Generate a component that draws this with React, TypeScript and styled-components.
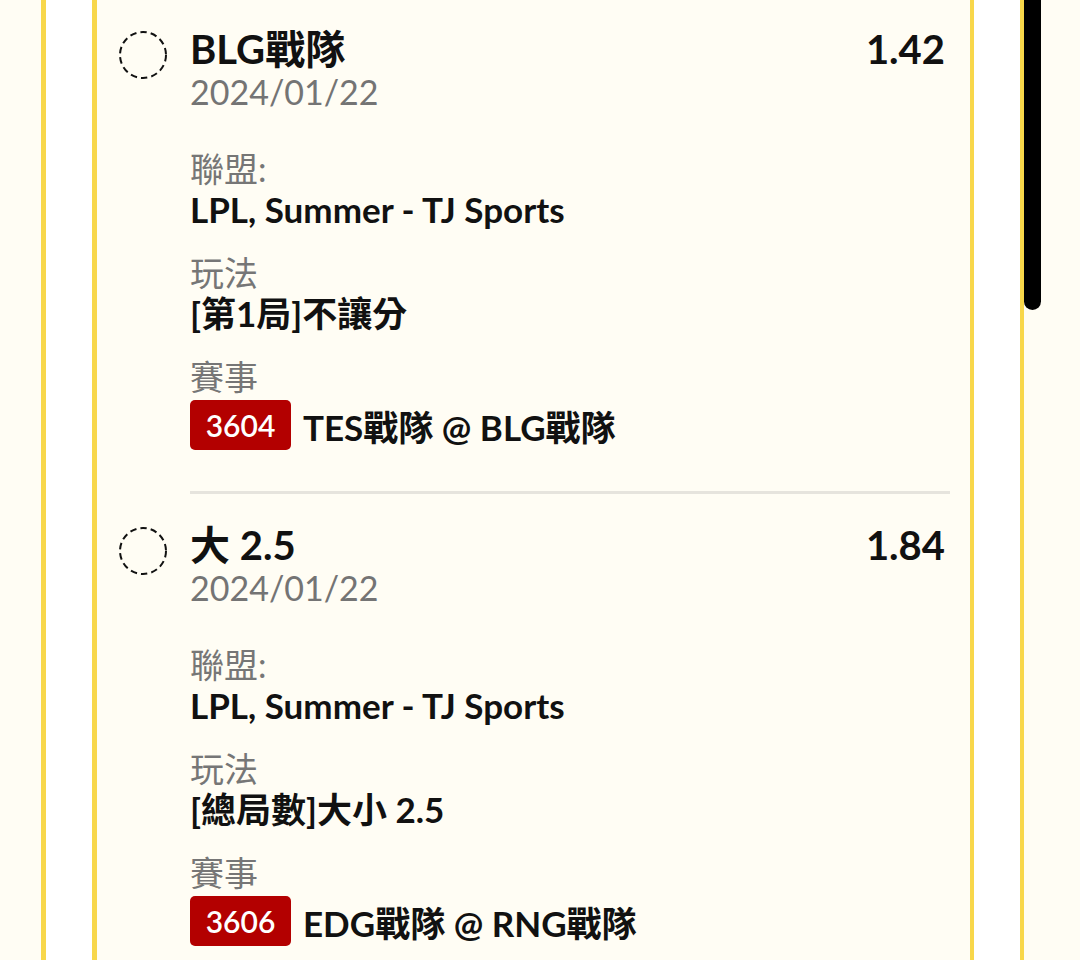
import React from "react";
import styled, { createGlobalStyle } from "styled-components";

const Global = createGlobalStyle`
  html, body { margin: 0; padding: 0; background: #fffdf4; }
  body { font-family: "Lato", "Noto Sans CJK TC", sans-serif; overflow: hidden; }
`;

const Page = styled.div`
  position: relative;
  height: 960px;
  overflow: hidden;
  padding-left: 41px;
`;

const OuterFrame = styled.div`
  width: 983px;
  box-sizing: border-box;
  background: #ffffff;
  border-left: 5px solid #f8d74a;
  border-right: 4px solid #f8d74a;
  padding: 0 46px 0 46px;
  min-height: 960px;
`;

const InnerCard = styled.div`
  background: #fffdf4;
  border-left: 5px solid #f8d74a;
  border-right: 4px solid #f8d74a;
  min-height: 960px;
  padding: 0 20px 0 22px;
`;

const Scrollbar = styled.div`
  position: absolute;
  left: 1024px;
  top: -30px;
  width: 17px;
  height: 340px;
  border-radius: 9px;
  background: #000;
`;

const Item = styled.div`
  display: grid;
  grid-template-columns: 48px 1fr;
  column-gap: 23px;
  padding: 26px 0 41px;
`;

const Radio = styled.svg`
  width: 48px;
  height: 48px;
  margin-top: 5px;
  display: block;
`;

const Body = styled.div`
  display: flex;
  flex-direction: column;
`;

const TitleRow = styled.div`
  display: flex;
  justify-content: space-between;
  align-items: baseline;
  padding-right: 5px;
`;

const Title = styled.div`
  font-size: 40px;
  line-height: 46px;
  font-weight: 700;
  color: #111;
`;

const Odds = styled.div`
  font-size: 40px;
  line-height: 46px;
  font-weight: 700;
  color: #111;
`;

const DateText = styled.div`
  font-size: 34px;
  line-height: 40px;
  color: #747474;
  margin-bottom: 36px;
`;

const Field = styled.div`
  display: flex;
  flex-direction: column;
  & + & {
    margin-top: 22px;
  }
`;

const Label = styled.div`
  font-size: 34px;
  line-height: 41px;
  color: #767676;
`;

const Value = styled.div`
  font-size: 35px;
  line-height: 41px;
  font-weight: 700;
  color: #111;
`;

const MatchRow = styled.div`
  display: flex;
  align-items: center;
  gap: 12px;
  height: 50px;
  margin-top: 3px;
`;

const Badge = styled.span`
  display: inline-flex;
  align-items: center;
  justify-content: center;
  width: 101px;
  height: 50px;
  border-radius: 5px;
  background: #b30000;
  color: #fff;
  font-size: 30px;
  font-weight: 600;
`;

const MatchName = styled.span`
  font-size: 35px;
  font-weight: 700;
  color: #111;
`;

const Divider = styled.div`
  height: 3px;
  background: #e6e4dd;
  margin: 0 0 2px 71px;
`;

type Bet = {
  title: string;
  odds: string;
  date: string;
  league: string;
  play: string;
  code: string;
  match: string;
};

const bets: Bet[] = [
  {
    title: "BLG戰隊",
    odds: "1.42",
    date: "2024/01/22",
    league: "LPL, Summer - TJ Sports",
    play: "[第1局]不讓分",
    code: "3604",
    match: "TES戰隊 @ BLG戰隊",
  },
  {
    title: "大 2.5",
    odds: "1.84",
    date: "2024/01/22",
    league: "LPL, Summer - TJ Sports",
    play: "[總局數]大小 2.5",
    code: "3606",
    match: "EDG戰隊 @ RNG戰隊",
  },
];

const RadioIcon = () => (
  <Radio viewBox="0 0 48 48">
    <circle
      cx="24"
      cy="24"
      r="23"
      fill="none"
      stroke="#111"
      strokeWidth="2"
      strokeDasharray="6.5 4"
    />
  </Radio>
);

const BetItem = ({ bet, divider }: { bet: Bet; divider: boolean }) => (
  <>
    <Item>
      <RadioIcon />
      <Body>
        <TitleRow>
          <Title>{bet.title}</Title>
          <Odds>{bet.odds}</Odds>
        </TitleRow>
        <DateText>{bet.date}</DateText>
        <Field>
          <Label>聯盟:</Label>
          <Value>{bet.league}</Value>
        </Field>
        <Field>
          <Label>玩法</Label>
          <Value>{bet.play}</Value>
        </Field>
        <Field>
          <Label>賽事</Label>
          <MatchRow>
            <Badge>{bet.code}</Badge>
            <MatchName>{bet.match}</MatchName>
          </MatchRow>
        </Field>
      </Body>
    </Item>
    {divider && <Divider />}
  </>
);

export default function App() {
  return (
    <>
      <Global />
      <Page>
        <OuterFrame>
          <InnerCard>
            {bets.map((b, i) => (
              <BetItem key={i} bet={b} divider={i < bets.length - 1} />
            ))}
          </InnerCard>
        </OuterFrame>
        <Scrollbar />
      </Page>
    </>
  );
}
